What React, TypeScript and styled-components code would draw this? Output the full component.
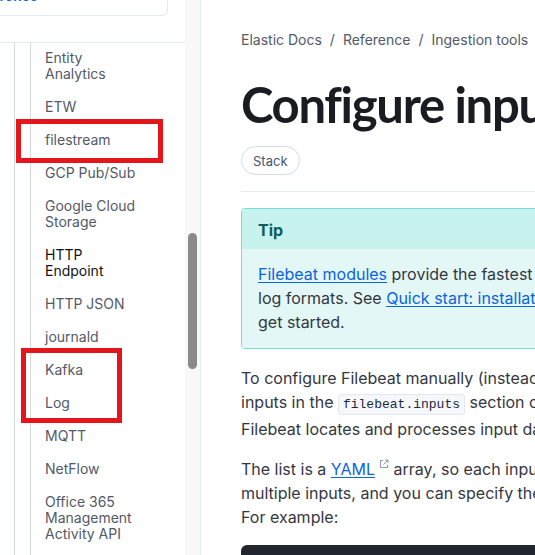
import React from "react";
import styled, { createGlobalStyle } from "styled-components";

const Global = createGlobalStyle`
  html, body {
    margin: 0;
    padding: 0;
    width: 535px;
    height: 555px;
    overflow: hidden;
    background: #ffffff;
    font-family: Inter, "Noto Sans", Arial, sans-serif;
    -webkit-font-smoothing: antialiased;
  }
  * { box-sizing: border-box; }
`;

const Page = styled.div`
  position: relative;
  display: flex;
  width: 535px;
  height: 555px;
  overflow: hidden;
`;

const Sidebar = styled.aside`
  flex: none;
  width: 201px;
  height: 100%;
  display: flex;
  border-right: 1px solid #e3e8f2;
`;

const SideScroll = styled.div`
  width: 185px;
  display: flex;
  flex-direction: column;
`;

const SideTop = styled.div`
  flex: none;
  height: 43px;
  display: flex;
  align-items: flex-start;
  border-bottom: 1px solid #e3e8f2;
`;

const BackCard = styled.div`
  flex: none;
  margin: -30px 0 0 -40px;
  width: 208px;
  height: 46px;
  border: 1px solid #e3e8f2;
  border-radius: 6px;
  display: flex;
  align-items: flex-end;
  padding: 0 0 11px 8px;
`;

const BackLink = styled.span`
  color: #0b64dd;
  font-size: 14px;
  font-weight: 600;
  line-height: 16px;
`;

const Guide = styled.div<{ $indent: number }>`
  margin-left: ${(p) => p.$indent}px;
  border-left: 1px solid #d3d8e0;
  flex: 1;
  display: flex;
  flex-direction: column;
`;

const NavList = styled.ul`
  list-style: none;
  margin: 0;
  padding: 7px 0 0 14px;
  display: flex;
  flex-direction: column;
  gap: 17px;
`;

const NavItem = styled.li<{ $active?: boolean }>`
  font-size: 14px;
  line-height: 16px;
  white-space: pre-line;
  color: ${(p) => (p.$active ? "#111216" : "#535966")};
`;

const Track = styled.div`
  width: 15px;
  background: #f8f8f8;
  padding: 233px 3px 0 3px;
`;

const Thumb = styled.div`
  width: 9px;
  height: 136px;
  border-radius: 5px;
  background: #8a8a8a;
`;

const Main = styled.main`
  flex: 1;
  min-width: 0;
  padding-left: 40px;
  overflow: hidden;
`;

const Article = styled.article`
  width: 760px;
  display: flex;
  flex-direction: column;
`;

const Breadcrumb = styled.nav`
  margin-top: 30px;
  display: flex;
  gap: 8px;
  font-size: 14px;
  line-height: 20px;
  color: #535966;
`;

const Title = styled.h1`
  margin: 27px 0 0;
  font-family: Lato, Inter, sans-serif;
  font-size: 49px;
  line-height: 55px;
  font-weight: 700;
  letter-spacing: -1.3px;
  color: #1a1c21;
`;

const Pill = styled.span`
  margin-top: 14px;
  align-self: flex-start;
  height: 29px;
  padding: 0 11px;
  display: flex;
  align-items: center;
  border: 1px solid #d3dae6;
  border-radius: 15px;
  font-size: 13px;
  color: #48546a;
`;

const Rule = styled.hr`
  margin: 16px 0 0;
  border: none;
  border-top: 1px solid #e3e8f2;
`;

const Callout = styled.section`
  margin-top: 16px;
  border: 1px solid #7adcd4;
  border-radius: 4px;
  overflow: hidden;
`;

const CalloutHead = styled.div`
  background: #c8f2ee;
  padding: 9px 16px 7px;
  font-size: 16px;
  line-height: 24px;
  font-weight: 700;
  color: #0d5e58;
`;

const CalloutBody = styled.div`
  background: #e3f8f6;
  padding: 13px 16px 14px;
  font-size: 16px;
  line-height: 24px;
  color: #343741;
`;

const Para = styled.p<{ $top: number }>`
  margin: ${(p) => p.$top}px 0 0;
  font-size: 16px;
  line-height: 24px;
  color: #343741;
`;

const Link = styled.a`
  color: #0b64dd;
  text-decoration: underline;
  text-underline-offset: 2px;
`;

const Code = styled.code`
  font-family: "Liberation Mono", "DejaVu Sans Mono", monospace;
  font-size: 13px;
  padding: 2px 4px;
  background: #f5f7fa;
  border: 1px solid #e3e8f2;
  border-radius: 3px;
  color: #1d2a3e;
`;

const ExtIcon = styled.svg`
  width: 10px;
  height: 10px;
  margin-left: 4px;
  vertical-align: 6px;
`;

const CodeBlock = styled.pre`
  margin: 16px 0 0;
  height: 120px;
  background: #21262e;
  border-radius: 6px;
`;

const Marker = styled.div<{ $x: number; $y: number; $w: number; $h: number }>`
  position: absolute;
  left: ${(p) => p.$x}px;
  top: ${(p) => p.$y}px;
  width: ${(p) => p.$w}px;
  height: ${(p) => p.$h}px;
  border: 5px solid #e4151b;
  pointer-events: none;
`;

const navItems: { label: string; active?: boolean }[] = [
  { label: "Entity\nAnalytics" },
  { label: "ETW" },
  { label: "filestream" },
  { label: "GCP Pub/Sub" },
  { label: "Google Cloud\nStorage" },
  { label: "HTTP\nEndpoint", active: true },
  { label: "HTTP JSON" },
  { label: "journald" },
  { label: "Kafka" },
  { label: "Log" },
  { label: "MQTT" },
  { label: "NetFlow" },
  { label: "Office 365\nManagement\nActivity API" },
  { label: "Redis" },
];

export default function App() {
  return (
    <>
      <Global />
      <Page>
        <Sidebar>
          <SideScroll>
            <SideTop>
              <BackCard>
                <BackLink>Reference</BackLink>
              </BackCard>
            </SideTop>
            <Guide $indent={14}>
              <Guide $indent={15}>
                <NavList>
                  {navItems.map((it) => (
                    <NavItem key={it.label} $active={it.active}>
                      {it.label}
                    </NavItem>
                  ))}
                </NavList>
              </Guide>
            </Guide>
          </SideScroll>
          <Track>
            <Thumb />
          </Track>
        </Sidebar>
        <Main>
          <Article>
            <Breadcrumb>
              <span>Elastic Docs</span>
              <span>/</span>
              <span>Reference</span>
              <span>/</span>
              <span>Ingestion tools</span>
              <span>/</span>
              <span>Beats</span>
            </Breadcrumb>
            <Title>Configure inputs</Title>
            <Pill>Stack</Pill>
            <Rule />
            <Callout>
              <CalloutHead>Tip</CalloutHead>
              <CalloutBody>
                <Link>Filebeat modules</Link> provide the fastest getting started experience for common
                <br />
                log formats. See <Link>Quick start: installation and configuration</Link> to learn how to
                <br />
                get started.
              </CalloutBody>
            </Callout>
            <Para $top={17}>
              To configure Filebeat manually (instead of using modules), you specify a list of
              <br />
              inputs in the <Code>filebeat.inputs</Code> section of the filebeat.yml. Inputs specify how
              <br />
              Filebeat locates and processes input data.
            </Para>
            <Para $top={16}>
              The list is a <Link>YAML</Link>
              <ExtIcon viewBox="0 0 10 10" fill="none" stroke="#8e96a3" strokeWidth="1">
                <path d="M4 1.5H1.5v7h7V6" />
                <path d="M6 1h3v3M9 1L4.5 5.5" />
              </ExtIcon>{" "}
              array, so each input begins with a dash (-). You can specify
              <br />
              multiple inputs, and you can specify the same input type more than once.
              <br />
              For example:
            </Para>
            <CodeBlock />
          </Article>
        </Main>
        <Marker $x={16} $y={119} $w={147} $h={44} />
        <Marker $x={21} $y={348} $w={101} $h={75} />
      </Page>
    </>
  );
}
